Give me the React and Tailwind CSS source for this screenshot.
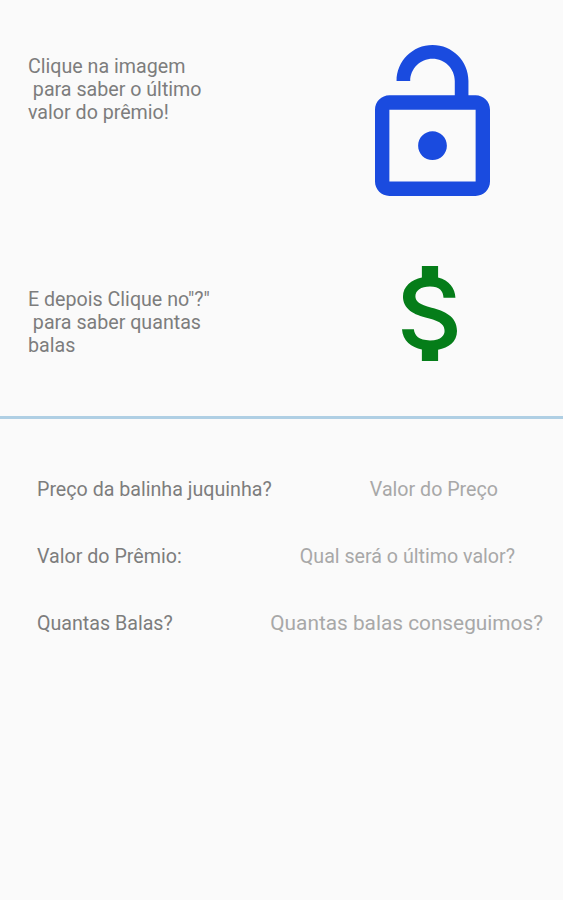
const ROWS = [
  {
    label: "Preço da balinha juquinha?",
    value: "Valor do Preço",
    valueClass: "mr-[65px]",
  },
  {
    label: "Valor do Prêmio:",
    value: "Qual será o último valor?",
    valueClass: "mr-12",
  },
  {
    label: "Quantas Balas?",
    value: "Quantas balas conseguimos?",
    valueClass: "mr-5 text-[20.8px]",
  },
];

function LockOpenIcon() {
  return (
    <svg viewBox="4 1 16 21" preserveAspectRatio="none" className="w-[115px] h-[151px]" fill="#1a4bdf">
      <path d="M12 17c1.1 0 2-.9 2-2s-.9-2-2-2-2 .9-2 2 .9 2 2 2zm6-9h-1V6c0-2.76-2.24-5-5-5S7 3.24 7 6h1.9c0-1.71 1.39-3.1 3.1-3.1 1.71 0 3.1 1.39 3.1 3.1v2H6c-1.1 0-2 .9-2 2v10c0 1.1.9 2 2 2h12c1.1 0 2-.9 2-2V10c0-1.1-.9-2-2-2zm0 12H6V10h12v10z" />
    </svg>
  );
}

function MoneyIcon() {
  return (
    <svg viewBox="6.32 3 10.18 18" preserveAspectRatio="none" className="w-[55px] h-[95px]" fill="#057d19">
      <path d="M11.8 10.9c-2.27-.59-3-1.2-3-2.15 0-1.09 1.01-1.85 2.7-1.85 1.78 0 2.44.85 2.5 2.1h2.21c-.07-1.72-1.12-3.3-3.21-3.81V3h-3v2.16c-1.94.42-3.5 1.68-3.5 3.61 0 2.31 1.91 3.46 4.7 4.13 2.5.6 3 1.48 3 2.41 0 .69-.49 1.79-2.7 1.79-2.06 0-2.87-.92-2.98-2.1h-2.2c.12 2.19 1.76 3.42 3.68 3.83V21h3v-2.15c1.95-.37 3.5-1.5 3.5-3.55 0-2.84-2.43-3.81-4.7-4.4z" />
    </svg>
  );
}

export default function App() {
  return (
    <div className="w-full h-[900px] overflow-hidden bg-[#fafafa] font-['Roboto',sans-serif] text-[19.65px] leading-[23px] text-[#7d7d7d]">
      <section className="flex justify-between h-[221px] pl-7 pr-[73px]">
        <p className="mt-[55px] whitespace-pre">
          {"Clique na imagem\n para saber o último\nvalor do prêmio!"}
        </p>
        <button className="self-start mt-[45px] cursor-pointer">
          <LockOpenIcon />
        </button>
      </section>
      <section className="flex justify-between h-[195px] pl-7 pr-[106px]">
        <p className="mt-[67px] whitespace-pre">
          {'E depois Clique no"?"\n para saber quantas\nbalas'}
        </p>
        <button className="self-start mt-[45px] cursor-pointer">
          <MoneyIcon />
        </button>
      </section>
      <hr className="h-[3px] border-0 bg-[#afcfe4]" />
      <section className="flex flex-col gap-11 pt-[59px] pl-[37px]">
        {ROWS.map((row) => (
          <div key={row.label} className="flex justify-between whitespace-nowrap">
            <span>{row.label}</span>
            <span className={`text-[#a8a8a8] ${row.valueClass}`}>{row.value}</span>
          </div>
        ))}
      </section>
    </div>
  );
}
